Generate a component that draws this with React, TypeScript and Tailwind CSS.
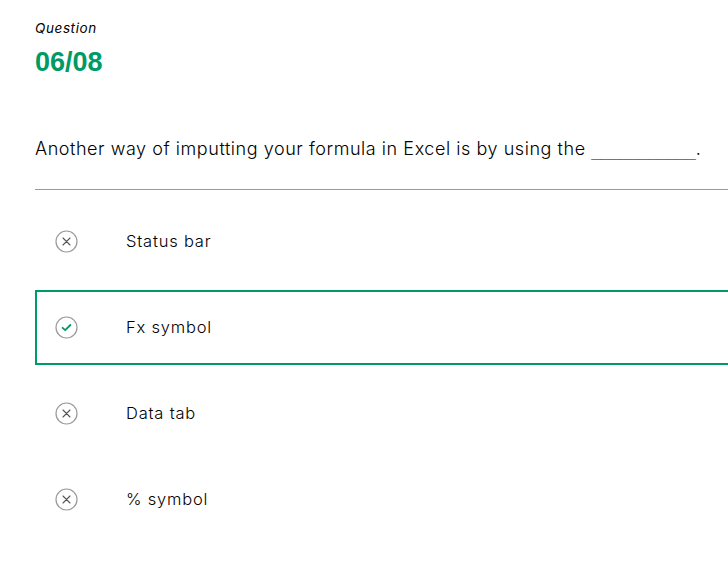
import React from "react";

const XIcon = () => (
  <svg width="23" height="23" viewBox="0 0 23 23" fill="none">
    <circle cx="11.5" cy="11.5" r="10.5" stroke="#9a9a9a" strokeWidth="1.2" />
    <path d="M8 8L15 15M15 8L8 15" stroke="#555" strokeWidth="1.1" strokeLinecap="round" />
  </svg>
);

const CheckIcon = () => (
  <svg width="23" height="23" viewBox="0 0 23 23" fill="none">
    <circle cx="11.5" cy="11.5" r="10.5" stroke="#9a9a9a" strokeWidth="1.2" />
    <path d="M7.6 11.8L10.2 14.2L15.4 9" stroke="#009a64" strokeWidth="1.8" strokeLinecap="round" strokeLinejoin="round" />
  </svg>
);

const options = [
  { label: "Status bar", correct: false },
  { label: "Fx symbol", correct: true },
  { label: "Data tab", correct: false },
  { label: "% symbol", correct: false },
];

export default function App() {
  return (
    <div
      className="w-[728px] h-[561px] overflow-hidden bg-white text-black"
      style={{ fontFamily: 'Inter, "Noto Sans", sans-serif' }}
    >
      <div className="pl-[35px] pt-[19px]">
        <div className="text-[13.5px] italic leading-[18px] tracking-[0.6px] text-black">Question</div>
        <div className="mt-[10px] text-[27px] font-bold leading-[30px] text-[#009a64]" style={{ fontFamily: '"Liberation Sans", Arial, sans-serif' }}>
          06/08
        </div>
        <div className="mt-[60px] h-[24px] text-[18px] font-light leading-[24px] tracking-[0.55px] whitespace-nowrap">
          Another way of imputting your formula in Excel is by using the{" "}
          <span className="text-[19px] leading-[18px] tracking-normal" style={{ fontFamily: '"DejaVu Sans", sans-serif' }}>___________</span>.
        </div>
        <div className="mt-[28px] h-px w-[720px] bg-[#999999]" />
        <div className="mt-[14px] flex w-[720px] flex-col gap-[11px]">
          {options.map((o) => (
            <div
              key={o.label}
              className={`flex h-[75px] items-center border-2 ${o.correct ? "border-[#009a64]" : "border-transparent"}`}
            >
              <div className="ml-[18px] flex w-[23px] items-center justify-center">
                {o.correct ? <CheckIcon /> : <XIcon />}
              </div>
              <div className="ml-[48px] text-[16.5px] font-light tracking-[0.8px]">{o.label}</div>
            </div>
          ))}
        </div>
      </div>
    </div>
  );
}
